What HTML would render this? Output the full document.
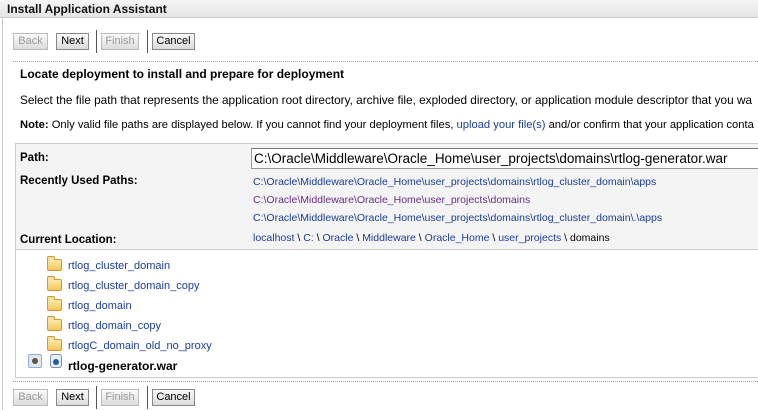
<!DOCTYPE html>
<html><head><style>
*{margin:0;padding:0;box-sizing:border-box}
html,body{overflow:hidden}
body{width:758px;height:410px;overflow:hidden;background:#fff;font-family:"Liberation Sans",sans-serif;font-size:11px;color:#000;position:relative}
.t{position:absolute;white-space:nowrap}
.title{position:absolute;left:0;top:0;width:758px;height:18px;background:linear-gradient(#f6f6f6,#e4e4e4);border-bottom:1px solid #ccc;font-weight:bold;font-size:12px;padding:2px 0 0 7px;color:#111}
.vl{position:absolute;left:2px;top:18px;width:1px;height:392px;background:#c8c8c8}
.btn{position:absolute;height:17px;border:1px solid #888;background:linear-gradient(#fafafa,#dcdcdc);font-size:11px;text-align:center;line-height:15px;color:#000}
.dis{color:#999;border-color:#bbb}
.sep{position:absolute;width:1px;height:23px;background:#555}
.dot{position:absolute;left:13px;width:745px;border-top:1px dotted #aaa}
a,.lk{color:#1a3d9c}
.vis{color:#6b2c8a}
.b{font-weight:bold}
.fold{position:absolute;left:47px;width:15px;height:12px;border:1px solid #c99a35;border-radius:2px;background:linear-gradient(#fde9a8,#f5c65d)}
.fold:before{content:"";position:absolute;left:-1px;top:-4px;width:6px;height:3px;border:1px solid #c99a35;border-bottom:none;background:#fbe09a;border-radius:2px 2px 0 0}
.clip{position:absolute;left:0;top:0;width:758px;height:410px;overflow:hidden}
</style></head><body><div class="clip">
<div class="title">Install Application Assistant</div>
<div class="vl"></div>

<div class="btn dis" style="left:13px;top:33px;width:35px">Back</div>
<div class="btn" style="left:56px;top:33px;width:33px">Next</div>
<div class="sep" style="left:96px;top:30px"></div>
<div class="btn dis" style="left:101px;top:33px;width:38px">Finish</div>
<div class="sep" style="left:147px;top:30px"></div>
<div class="btn" style="left:152px;top:33px;width:43px">Cancel</div>
<div class="dot" style="top:61px"></div>

<div class="t b" style="left:20px;top:67px;font-size:12px">Locate deployment to install and prepare for deployment</div>
<div class="t" style="left:20px;top:93px;font-size:11.8px">Select the file path that represents the application root directory, archive file, exploded directory, or application module descriptor that you wa</div>
<div class="t" style="left:20px;top:119px;font-size:11.2px"><b>Note:</b> Only valid file paths are displayed below. If you cannot find your deployment files, <span class="lk">upload your file(s)</span> and/or confirm that your application conta</div>

<div style="position:absolute;left:15px;top:143px;width:750px;height:235px;border:1px solid #ccc;border-right:none;background:#fff"></div>
<div style="position:absolute;left:16px;top:144px;width:742px;height:106px;background:#f4f4f4;border-bottom:1px solid #d0d0d0"></div>

<div class="t b" style="left:20px;top:152px;font-size:11.5px">Path:</div>
<div style="position:absolute;left:251px;top:148px;width:510px;height:21px;border:1px solid #999;border-top-color:#777;background:#fff;font-size:13.5px;line-height:19px;padding-left:2px;white-space:nowrap;overflow:hidden">C:\Oracle\Middleware\Oracle_Home\user_projects\domains\rtlog-generator.war</div>
<div class="t b" style="left:20px;top:175px;font-size:11.5px">Recently Used Paths:</div>
<div class="t lk" style="left:253px;top:176px;font-size:10.5px">C:\Oracle\Middleware\Oracle_Home\user_projects\domains\rtlog_cluster_domain\apps</div>
<div class="t vis" style="left:253px;top:194px;font-size:10.5px">C:\Oracle\Middleware\Oracle_Home\user_projects\domains</div>
<div class="t lk" style="left:253px;top:212px;font-size:10.5px">C:\Oracle\Middleware\Oracle_Home\user_projects\domains\rtlog_cluster_domain\.\apps</div>
<div class="t b" style="left:20px;top:234px;font-size:11.5px">Current Location:</div>
<div class="t" style="left:253px;top:232px;font-size:10.5px"><span class="lk">localhost</span> \ <span class="lk">C:</span> \ <span class="lk">Oracle</span> \ <span class="lk">Middleware</span> \ <span class="lk">Oracle_Home</span> \ <span class="lk">user_projects</span> \ domains</div>

<div class="fold" style="top:259px"></div><div class="t lk" style="left:68px;top:260px">rtlog_cluster_domain</div>
<div class="fold" style="top:279px"></div><div class="t lk" style="left:68px;top:280px">rtlog_cluster_domain_copy</div>
<div class="fold" style="top:299px"></div><div class="t lk" style="left:68px;top:300px">rtlog_domain</div>
<div class="fold" style="top:319px"></div><div class="t lk" style="left:68px;top:320px">rtlog_domain_copy</div>
<div class="fold" style="top:339px"></div><div class="t lk" style="left:68px;top:340px">rtlogC_domain_old_no_proxy</div>
<div style="position:absolute;left:28px;top:354px;width:14px;height:14px;border:1px solid #8ab0e8;background:#e6e6e6;border-radius:2px"><div style="position:absolute;left:3px;top:3px;width:6px;height:6px;border-radius:50%;background:#555"></div></div>
<div style="position:absolute;left:50px;top:354px;width:12px;height:14px;border:1px solid #7a8fa8;border-radius:3px;background:#e8eef6"><div style="position:absolute;left:2px;top:4px;width:6px;height:6px;border-radius:50%;background:#1d5f9a"></div></div>
<div class="t b" style="left:68px;top:359px;font-size:12px">rtlog-generator.war</div>

<div class="dot" style="top:381px"></div>
<div class="btn dis" style="left:13px;top:389px;width:35px">Back</div>
<div class="btn" style="left:56px;top:389px;width:33px">Next</div>
<div class="sep" style="left:96px;top:386px"></div>
<div class="btn dis" style="left:101px;top:389px;width:38px">Finish</div>
<div class="sep" style="left:147px;top:386px"></div>
<div class="btn" style="left:152px;top:389px;width:43px">Cancel</div>
</div></body></html>
